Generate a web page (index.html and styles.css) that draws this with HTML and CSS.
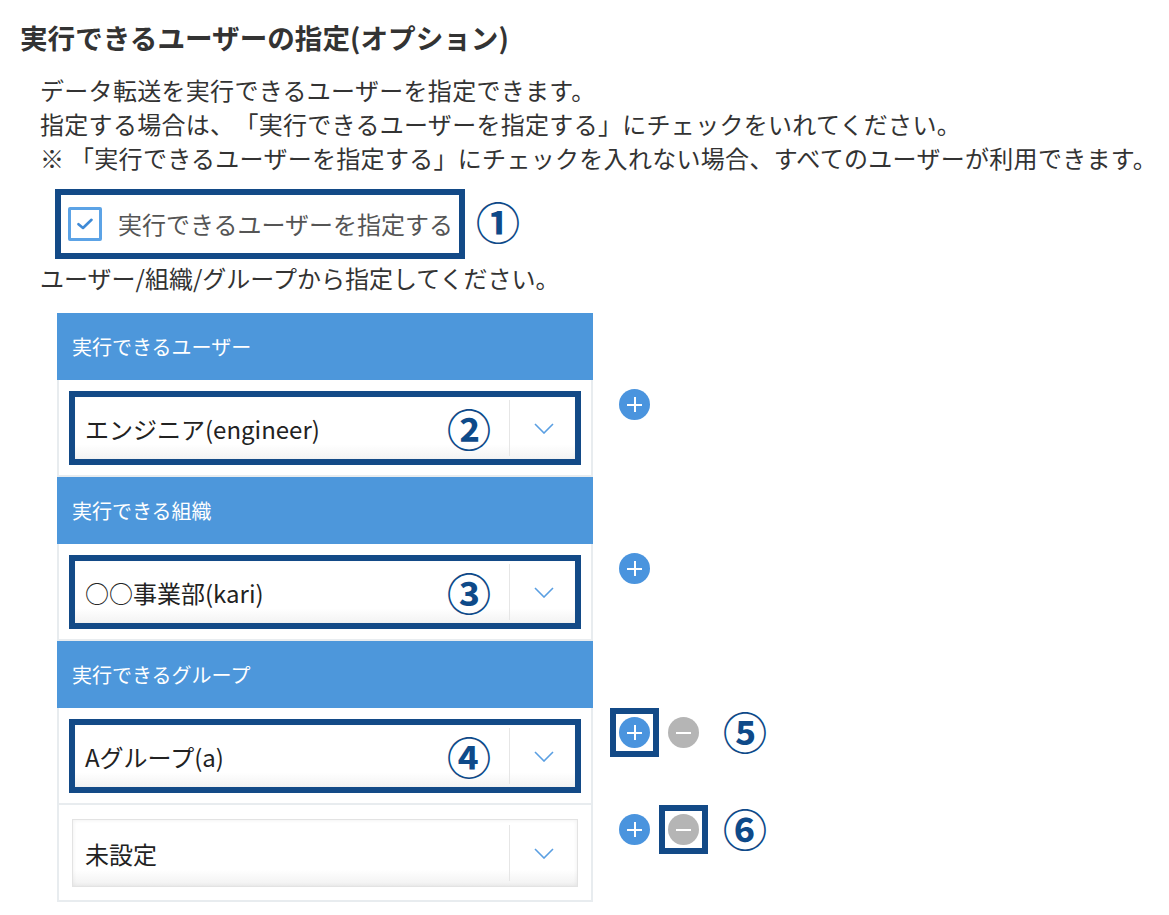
FILE: index.html
```html
<!DOCTYPE html>
<html lang="ja">
<head>
<meta charset="utf-8">
<title>実行できるユーザーの指定</title>
<link rel="stylesheet" href="styles.css">
</head>
<body>
<main class="page">
  <h1 class="title">実行できるユーザーの指定(オプション)</h1>
  <div class="desc">
    <p>データ転送を実行できるユーザーを指定できます。</p>
    <p>指定する場合は、「実行できるユーザーを指定する」にチェックをいれてください。</p>
    <p>※ 「実行できるユーザーを指定する」にチェックを入れない場合、すべてのユーザーが利用できます。</p>
  </div>
  <div class="check-row">
    <label class="check-frame">
      <span class="checkbox"><svg viewBox="0 0 16 12" width="16" height="12"><path d="M1.5 6.2 L6 10 L14.5 1.8" fill="none" stroke="#3f8ad6" stroke-width="2.6" stroke-linecap="round" stroke-linejoin="round"/></svg></span>
      <span class="check-label">実行できるユーザーを指定する</span>
    </label>
    <span class="num">①</span>
  </div>
  <p class="hint">ユーザー/組織/グループから指定してください。</p>

  <div class="grid">
    <div class="head">実行できるユーザー</div><div class="side"></div>
    <div class="cell">
      <div class="select marked">
        <span class="val">エンジニア(engineer)</span><span class="num in">②</span>
        <span class="arrow"><svg viewBox="0 0 20 11" width="20" height="11"><path d="M1 1 L10 10 L19 1" fill="none" stroke="#5a9fe2" stroke-width="1.6"/></svg></span>
      </div>
    </div>
    <div class="actions"><span class="btn plus"></span></div>

    <div class="head">実行できる組織</div><div class="side"></div>
    <div class="cell">
      <div class="select marked">
        <span class="val">○○事業部(kari)</span><span class="num in">③</span>
        <span class="arrow"><svg viewBox="0 0 20 11" width="20" height="11"><path d="M1 1 L10 10 L19 1" fill="none" stroke="#5a9fe2" stroke-width="1.6"/></svg></span>
      </div>
    </div>
    <div class="actions"><span class="btn plus"></span></div>

    <div class="head">実行できるグループ</div><div class="side"></div>
    <div class="cell">
      <div class="select marked">
        <span class="val">Aグループ(a)</span><span class="num in">④</span>
        <span class="arrow"><svg viewBox="0 0 20 11" width="20" height="11"><path d="M1 1 L10 10 L19 1" fill="none" stroke="#5a9fe2" stroke-width="1.6"/></svg></span>
      </div>
    </div>
    <div class="actions"><span class="frame"><span class="btn plus"></span></span><span class="btn minus"></span><span class="num side-num">⑤</span></div>

    <div class="cell last">
      <div class="select">
        <span class="val">未設定</span>
        <span class="arrow"><svg viewBox="0 0 20 11" width="20" height="11"><path d="M1 1 L10 10 L19 1" fill="none" stroke="#5a9fe2" stroke-width="1.6"/></svg></span>
      </div>
    </div>
    <div class="actions"><span class="btn plus"></span><span class="frame"><span class="btn minus"></span></span><span class="num side-num">⑥</span></div>
  </div>
</main>
</body>
</html>
```

FILE: styles.css
```css
html, body {
  margin: 0;
  padding: 0;
  background: #ffffff;
}
body {
  font-family: "Noto Sans CJK JP", "Noto Sans", sans-serif;
  color: #333333;
  text-spacing-trim: space-all;
}
.page {
  padding: 17px 0 0 20px;
}
.title {
  margin: 0;
  font-size: 27.6px;
  line-height: 40px;
  font-weight: 700;
  color: #333333;
}
.desc {
  margin: 16px 0 0 20px;
  font-size: 24px;
  line-height: 34px;
  letter-spacing: 0.3px;
}
.desc p {
  margin: 0;
  white-space: nowrap;
}
.check-row {
  display: flex;
  align-items: center;
  margin: 14px 0 0 35px;
}
.check-frame {
  display: flex;
  align-items: center;
  border: 6px solid #134a87;
  padding: 12px 6px 12px 7px;
}
.checkbox {
  width: 34px;
  height: 34px;
  box-sizing: border-box;
  border: 3px solid #5ca3e6;
  border-radius: 2px;
  display: flex;
  align-items: center;
  justify-content: center;
  background: #fff;
}
.check-label {
  margin-left: 16px;
  font-size: 24px;
  line-height: 34px;
  color: #555555;
}
.num {
  font-size: 44px;
  line-height: 44px;
  font-weight: 700;
  color: #0e4a89;
}
.check-row .num {
  margin: -6px 0 0 11px;
}
.hint {
  margin: 2px 0 18px 20px;
  font-size: 24px;
  line-height: 34px;
}
.grid {
  display: grid;
  grid-template-columns: 536px auto;
  margin-left: 37px;
}
.head {
  height: 67px;
  box-sizing: border-box;
  background: #4d97db;
  color: #ffffff;
  font-size: 20px;
  line-height: 67px;
  padding-left: 15px;
}
.cell {
  border-left: 2px solid #e8ecef;
  border-right: 2px solid #e8ecef;
  border-bottom: 2px solid #e8ecef;
  padding: 14px 13px 13px;
}
.select {
  height: 68px;
  box-sizing: border-box;
  display: flex;
  align-items: center;
  border: 1px solid #e3e3e3;
  background: linear-gradient(#ffffff 75%, #f1f1f1);
  box-shadow: inset 0 0 4px rgba(0, 0, 0, 0.07);
}
.select.marked {
  outline: 6px solid #134a87;
  outline-offset: -3px;
}
.val {
  flex: 1;
  padding-left: 12px;
  font-size: 24px;
  color: #222222;
}
.num.in {
  margin-right: 18px;
}
.arrow {
  width: 67px;
  align-self: stretch;
  margin: 5px 0;
  border-left: 1px solid #e6e6e6;
  display: flex;
  align-items: center;
  justify-content: center;
}
.actions {
  display: flex;
  align-items: flex-start;
  gap: 18px;
  padding: 9px 0 0 26px;
}
.frame {
  display: block;
  width: 31px;
  height: 31px;
  outline: 6px solid #134a87;
  outline-offset: 3px;
}
.btn {
  display: block;
  width: 31px;
  height: 31px;
  border-radius: 50%;
  position: relative;
  flex: none;
}
.plus {
  background: #4a94de;
}
.minus {
  background: #b5b5b5;
}
.btn::before,
.btn::after {
  content: "";
  position: absolute;
  background: #ffffff;
  left: 50%;
  top: 50%;
}
.btn::before {
  width: 15px;
  height: 2px;
  margin: -1px 0 0 -7.5px;
}
.plus::after {
  width: 2px;
  height: 15px;
  margin: -7.5px 0 0 -1px;
}
.minus::after {
  display: none;
}
.side-num {
  margin: -8px 0 0 6px;
}
```
